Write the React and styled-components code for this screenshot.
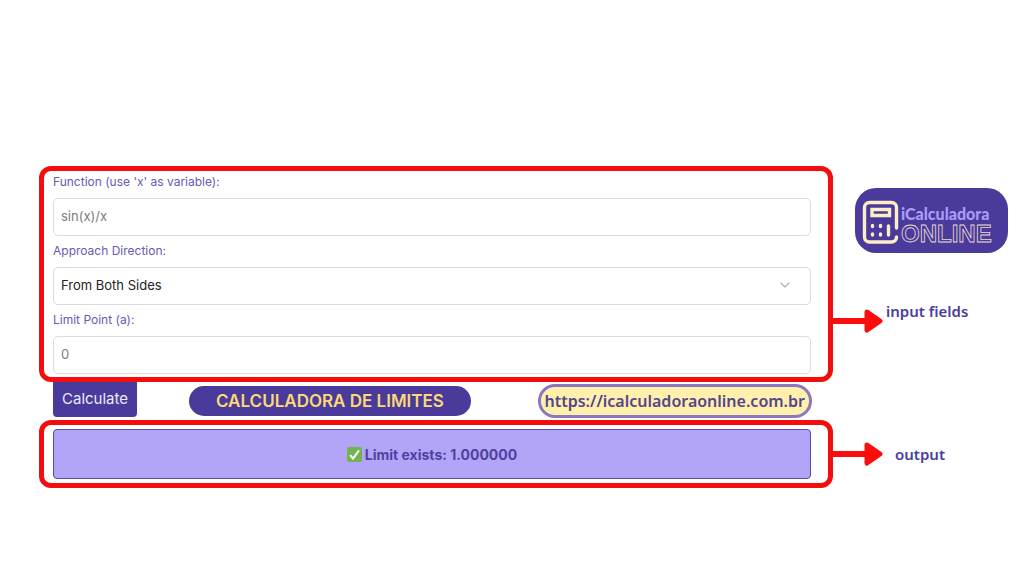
import styled, { createGlobalStyle } from 'styled-components';
import { ChevronDown } from 'lucide-react';

export default function App() {
    return (
        <>
            <GlobalStyle />
            <Page>
                <FieldsPanel>
                    <Label htmlFor="fn">Function (use 'x' as variable):</Label>
                    <Input id="fn" type="text" placeholder="sin(x)/x" />
                    <Label htmlFor="direction">Approach Direction:</Label>
                    <SelectWrap>
                        <Select id="direction" defaultValue="both">
                            <option value="both">From Both Sides</option>
                            <option value="left">From Left</option>
                            <option value="right">From Right</option>
                        </Select>
                        <ChevronDown size={16} color="#b5b5b5" />
                    </SelectWrap>
                    <Label htmlFor="point">Limit Point (a):</Label>
                    <Input id="point" type="text" placeholder="0" />
                </FieldsPanel>
                <Side>
                    <Logo />
                    <Callout $align="flex-start" $gap="3px">
                        <Arrow />
                        <p>input fields</p>
                    </Callout>
                </Side>
                <Actions>
                    <Button type="button">Calculate</Button>
                    <Title>CALCULADORA DE LIMITES</Title>
                    <SiteLink href="https://icalculadoraonline.com.br">https://icalculadoraonline.com.br</SiteLink>
                </Actions>
                <OutputPanel>
                    <Result>
                        <CheckMark />
                        <span>Limit exists: 1.000000</span>
                    </Result>
                </OutputPanel>
                <Callout $align="center" $gap="12px">
                    <Arrow />
                    <p>output</p>
                </Callout>
            </Page>
        </>
    )
}

function Arrow() {
    return (
        <svg width="50" height="24" viewBox="0 0 50 24" aria-hidden="true">
            <path d="M0 12H34" stroke="#fb0d0d" strokeWidth="6" />
            <path d="M34 3L47 12L34 21Z" fill="#fb0d0d" stroke="#fb0d0d" strokeWidth="5" strokeLinejoin="round" />
        </svg>
    )
}

function CheckMark() {
    return (
        <svg width="15" height="15" viewBox="0 0 15 15" aria-hidden="true">
            <rect width="15" height="15" rx="2" fill="#72b352" />
            <path d="M3.2 8.2L6 11.6L12 3.4" fill="none" stroke="#fff" strokeWidth="2" />
        </svg>
    )
}

function Logo() {
    return (
        <LogoBox>
            <svg width="153" height="65" viewBox="0 0 153 65" role="img" aria-label="iCalculadora ONLINE">
                <g fill="none" stroke="#fbedc4" strokeWidth="3.4" strokeLinecap="round">
                    <path d="M41.500 40V19.500A5 5 0 0 0 36.500 14.500H14.500A5 5 0 0 0 9.500 19.500V49A5 5 0 0 0 14.500 54H36.500A5 5 0 0 0 41.500 49" />
                    <path d="M17 21.500H34.500V27.500H17Z" />
                    <path d="M17.500 37.500V38.500M25.500 37.500V38.500M17.500 46V47M25.500 46V47M33.500 38V47" />
                </g>
                <LogoName x="46" y="32">iCalculadora</LogoName>
                <LogoOnline x="46" y="54">ONLINE</LogoOnline>
            </svg>
        </LogoBox>
    )
}

const GlobalStyle = createGlobalStyle`
    * {
        box-sizing: border-box;
    }
    body {
        margin: 0;
        background-color: #fff;
        font-family: Inter, "Liberation Sans", sans-serif;
    }
    p, h1 {
        margin: 0;
    }
`

const Page = styled.main`
    display: grid;
    grid-template-columns: 1fr 191px;
    padding: 166px 0 0 39px;
`

const Panel = styled.section`
    border: 5px solid #f30d0d;
    border-radius: 12px;
    min-width: 0;
`

const FieldsPanel = styled(Panel)`
    padding: 0 17px 3px 9px;
`

const OutputPanel = styled(Panel)`
    grid-column: 1;
    padding: 4px 17px 4px 9px;
`

const Label = styled.label`
    display: block;
    font-size: 12px;
    line-height: 22px;
    margin-bottom: 5px;
    color: #6a59b5;
`

const Input = styled.input`
    display: block;
    width: 100%;
    height: 38px;
    margin-bottom: 4px;
    padding: 0 7px 2px;
    border: 1px solid #dcdcdc;
    border-radius: 5px;
    background-color: #fff;
    font-family: inherit;
    font-size: 13px;
    color: #222;

    &::placeholder {
        color: #7d7d7d;
    }
    &:last-child {
        margin-bottom: 0;
    }
`

const SelectWrap = styled.div`
    position: relative;

    svg {
        position: absolute;
        top: 10px;
        right: 18px;
        pointer-events: none;
    }
`

const Select = styled(Input).attrs({ as: 'select' })`
    appearance: none;

    &:last-child, & {
        margin-bottom: 4px;
    }
`

const Side = styled.aside`
    padding-top: 22px;
`

const LogoBox = styled.div`
    width: 153px;
    height: 65px;
    margin: 0 0 56px 22px;
    border-radius: 21px;
    background-color: #493a9b;
`

const LogoName = styled.text`
    font-family: Lato, sans-serif;
    font-size: 16px;
    font-weight: 900;
    fill: #ab9bf8;
`

const LogoOnline = styled.text`
    font-family: "Liberation Sans", sans-serif;
    font-size: 24px;
    font-weight: 700;
    fill: none;
    stroke: #e9dccb;
    stroke-width: 0.8px;
`

const Callout = styled.div`
    display: flex;
    align-items: ${props => props.$align};
    gap: ${props => props.$gap};

    p {
        font-family: "Noto Sans", sans-serif;
        font-size: 15px;
        font-weight: 600;
        line-height: 4px;
        color: #4b3e9b;
    }
`

const Actions = styled.div`
    grid-column: 1 / 2;
    display: flex;
    align-items: center;
    height: 38px;
    padding: 0 21px 0 14px;
`

const Button = styled.button`
    align-self: flex-start;
    height: 35px;
    padding: 0 9px 2px;
    border: 0;
    border-radius: 0 0 4px 4px;
    background-color: #493a9b;
    font-family: inherit;
    font-size: 15px;
    color: #eeeafa;
`

const Title = styled.h1`
    margin-left: 52px;
    padding: 0 27px;
    border-radius: 15px;
    background-color: #493a9b;
    font-size: 17px;
    font-weight: 600;
    line-height: 30px;
    white-space: nowrap;
    color: #fbd976;
`

const SiteLink = styled.a`
    margin-left: auto;
    padding: 0 4px;
    border: 3px solid #8b77c2;
    border-radius: 17px;
    background-color: #fff0ab;
    font-family: "Noto Sans", sans-serif;
    font-size: 16px;
    font-weight: 600;
    line-height: 28px;
    text-decoration: none;
    white-space: nowrap;
    color: #54458f;
`

const Result = styled.div`
    display: flex;
    justify-content: center;
    align-items: center;
    gap: 3px;
    height: 50px;
    border: 1px solid #5c4aa5;
    border-radius: 4px;
    background-color: #b2a5f8;
    font-size: 14px;
    font-weight: 700;
    color: #50409f;
`
